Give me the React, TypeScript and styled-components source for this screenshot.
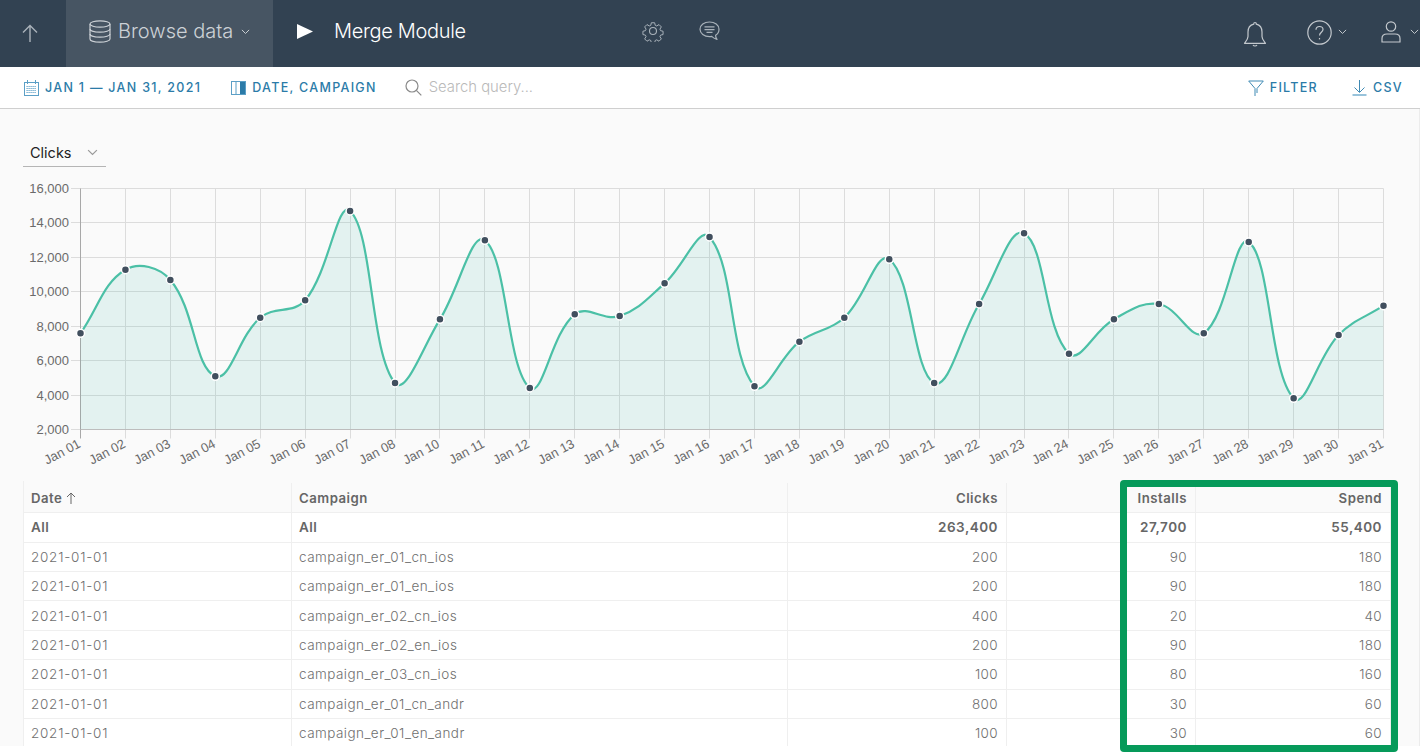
import styled, { createGlobalStyle } from 'styled-components';

const GlobalStyle = createGlobalStyle`
  html, body {
    margin: 0;
    padding: 0;
    background: #fff;
    font-family: Inter, 'Liberation Sans', sans-serif;
  }
`;

const Page = styled.div`
  position: relative;
  width: 1420px;
  height: 752px;
  overflow: hidden;
  background: #fff;
`;

const Nav = styled.header`
  display: flex;
  align-items: center;
  height: 67px;
  padding-right: 1.5px;
  box-sizing: border-box;
  background: #324252;
  color: #d5d9dd;
`;

const BackCell = styled.div`
  display: flex;
  align-items: center;
  justify-content: center;
  width: 60px;
  color: #aab2ba;
`;

const BrowseTab = styled.div`
  display: flex;
  align-items: center;
  height: 67px;
  width: 207px;
  padding: 0 0 5px 23px;
  margin-left: 6px;
  box-sizing: border-box;
  background: #475563;
  color: #ccd1d6;
  font-size: 20px;
  font-weight: 300;
  svg:first-child {
    margin-right: 7px;
  }
`;

const TabCaret = styled.span`
  display: flex;
  margin-left: 8px;
  margin-top: 2px;
`;

const RunButton = styled.div`
  display: flex;
  align-items: center;
  margin-left: 24px;
  padding-bottom: 5px;
  color: #fff;
  font-size: 20px;
  font-weight: 300;
  letter-spacing: -0.32px;
  gap: 21px;
`;

const ToolIcons = styled.div`
  display: flex;
  align-items: center;
  gap: 35px;
  margin-left: 176px;
  padding-bottom: 5px;
  color: #a9b2ba;
`;

const UserIcons = styled.div`
  display: flex;
  align-items: center;
  margin-left: auto;
  padding-bottom: 3px;
  color: #c3c8cd;
`;

const BellSlot = styled.span`
  display: flex;
  margin-top: 4px;
`;

const IconGroup = styled.div<{ $left: number; $gap: number }>`
  display: flex;
  align-items: center;
  gap: ${(p) => p.$gap}px;
  margin-left: ${(p) => p.$left}px;
`;

const Toolbar = styled.div`
  display: flex;
  align-items: center;
  height: 41px;
  padding: 0 17px 0 24px;
  background: #fff;
  border-bottom: 1px solid #cfcfcf;
`;

const ToolLink = styled.div<{ $gap?: number; $left?: number }>`
  display: flex;
  align-items: center;
  gap: ${(p) => p.$gap ?? 6}px;
  margin-left: ${(p) => p.$left ?? 0}px;
  color: #2b7ba8;
  font-size: 12.5px;
  font-weight: 500;
  letter-spacing: 1.3px;
  white-space: nowrap;
`;

const SearchBox = styled.div`
  display: flex;
  align-items: center;
  gap: 7px;
  margin-left: 28px;
  padding-bottom: 1px;
  color: #b9b9b9;
  font-size: 14.8px;
  font-weight: 300;
`;

const Spacer = styled.div`
  flex: 1;
`;

const Main = styled.main`
  height: 637px;
  overflow: hidden;
  background: #fafafa;
  border-right: 1px solid #ececec;
  box-sizing: border-box;
`;

const SelectRow = styled.div`
  display: flex;
  align-items: center;
  justify-content: space-between;
  box-sizing: border-box;
  width: 83px;
  height: 30px;
  margin: 28px 0 13px 23px;
  padding: 2px 8px 0 7px;
  border-bottom: 1px solid #b5b5b5;
  color: #222;
  font-size: 14.5px;
  font-weight: 400;
`;

const ChartSvg = styled.svg`
  display: block;
  width: 1420px;
  height: 301px;
`;

const AxisText = styled.text`
  fill: #6a6a6a;
  font-family: 'Liberation Sans', Arial, sans-serif;
  font-size: 13px;
`;

const Table = styled.div`
  width: 1367px;
  margin-left: 23px;
  border-left: 1px solid #efefef;
  color: #757575;
  font-size: 13.5px;
`;

const Row = styled.div<{ $head?: boolean; $total?: boolean }>`
  display: grid;
  grid-template-columns: 268px 496px 219px 189px 195px;
  box-sizing: border-box;
  height: ${(p) => (p.$head ? 32.2 : 29.4)}px;
  padding-top: ${(p) => (p.$head ? 2 : 0)}px;
  background: ${(p) => (p.$head ? '#fafafa' : '#fff')};
  border-bottom: 1px solid #efefef;
  font-weight: ${(p) => (p.$head || p.$total ? 600 : 300)};
  font-size: ${(p) => (p.$head ? 13.2 : 13.5)}px;
  color: ${(p) => (p.$head || p.$total ? '#666' : '#6f6f6f')};
  letter-spacing: ${(p) => (p.$head || p.$total ? 0.5 : 0.35)}px;
`;

const Cell = styled.div<{ $num?: boolean; $spacing?: number }>`
  display: flex;
  align-items: center;
  justify-content: ${(p) => (p.$num ? 'flex-end' : 'flex-start')};
  padding: 0 8px 0 7px;
  border-right: 1px solid #efefef;
  white-space: nowrap;
  gap: 4px;
  ${(p) => (p.$spacing ? `letter-spacing: ${p.$spacing}px;` : '')}
`;

const Highlight = styled.div`
  position: absolute;
  left: 1120px;
  top: 480px;
  width: 278px;
  height: 272px;
  box-sizing: border-box;
  border: 7px solid #069a5a;
  border-radius: 4px;
  pointer-events: none;
`;

const Caret = ({ size = 10, color = 'currentColor' }: { size?: number; color?: string }) => (
  <svg width={size} height={size * 0.6} viewBox="0 0 10 6" fill="none" stroke={color} strokeWidth="1.1">
    <path d="M1 1l4 4 4-4" />
  </svg>
);

const UpArrow = () => (
  <svg width="16" height="19" viewBox="0 0 16 19" fill="none" stroke="currentColor" strokeWidth="1.4">
    <path d="M8 18V1.5M1 8.500l7-7 7 7" />
  </svg>
);

const DatabaseIcon = () => (
  <svg width="22" height="23" viewBox="0 0 22 23" fill="none" stroke="currentColor" strokeWidth="1.2">
    <ellipse cx="11" cy="4" rx="10" ry="3.2" />
    <path d="M1 4v15c0 1.800 4.500 3.200 10 3.200s10-1.400 10-3.200V4" />
    <path d="M1 9c0 1.800 4.500 3.200 10 3.200S21 10.800 21 9M1 14c0 1.800 4.500 3.200 10 3.200s10-1.400 10-3.200" />
  </svg>
);

const PlayIcon = () => (
  <svg width="16" height="15" viewBox="0 0 16 15" fill="#fff">
    <path d="M0 0l16 7.500L0 15z" />
  </svg>
);

const GearIcon = () => (
  <svg width="22" height="22" viewBox="0 0 24 24" fill="none" stroke="currentColor" strokeWidth="1.2" strokeLinejoin="round">
    <circle cx="12" cy="12" r="3.800" />
    <path d="M10 2h4l.7 3.100 1.800.8 2.800-1.700 2.800 2.800-1.700 2.800.8 1.800 3 .7v4l-3 .7-.8 1.800 1.700 2.800-2.800 2.800-2.800-1.700-1.800.8-.7 3h-4l-.7-3-1.800-.8-2.800 1.700-2.800-2.800 1.700-2.800-.8-1.800-3-.7v-4l3-.7.8-1.800-1.700-2.800 2.800-2.800 2.800 1.700 1.800-.8z" transform="translate(1.200 1.200) scale(.9)" />
  </svg>
);

const ChatIcon = () => (
  <svg width="21" height="20" viewBox="0 0 21 20" fill="none" stroke="currentColor" strokeWidth="1.2" strokeLinejoin="round">
    <path d="M10.500 1C5.200 1 1 4.100 1 8.300s4.200 7.300 9.500 7.300c.8 0 1.500-.1 2.200-.2 1.300 1.300 3 2.300 5.300 3.100-1-1.100-1.400-2.500-1.400-4.200 2.100-1.300 3.400-3.500 3.400-6C20 4.100 15.800 1 10.500 1z" />
    <path d="M5.500 5.800h10M5.500 8.600h10M7.500 11.400h6" />
  </svg>
);

const BellIcon = () => (
  <svg width="24" height="26" viewBox="0 0 24 26" fill="none" stroke="currentColor" strokeWidth="1.2" strokeLinejoin="round">
    <path d="M12 1.500c-.9 0-1.300.6-1.300 1.700C7 4.100 5 7 5 11v4.500c0 2.800-1.800 4.600-3.500 6.800h21c-1.700-2.200-3.500-4-3.500-6.800V11c0-4-2-6.900-5.700-7.800 0-1.100-.4-1.700-1.300-1.700z" />
    <path d="M10 24c.5.700 1.200 1 2 1s1.500-.3 2-1" />
  </svg>
);

const HelpIcon = () => (
  <svg width="25" height="25" viewBox="0 0 25 25" fill="none" stroke="currentColor" strokeWidth="1.2">
    <circle cx="12.500" cy="12.500" r="11.700" />
    <path d="M9 9.800c0-2 1.600-3.300 3.500-3.300s3.500 1.300 3.500 3c0 2.700-3.500 2.800-3.500 6" />
    <path d="M12.500 18v1.400" />
  </svg>
);

const UserIcon = () => (
  <svg width="20" height="22" viewBox="0 0 20 22" fill="none" stroke="currentColor" strokeWidth="1.2">
    <circle cx="10" cy="5.500" r="4.700" />
    <path d="M1 21v-3.500C1 14.500 3 13 6 13h8c3 0 5 1.500 5 4.500V21z" />
  </svg>
);

const CalendarIcon = () => (
  <svg width="15" height="16" viewBox="0 0 15 16" fill="none" stroke="#5b9fc6" strokeWidth="1">
    <rect x=".5" y="2.500" width="14" height="13" />
    <path d="M3.500 0v4M11.500 0v4" />
    <path d="M2.500 6.500h10M2.500 8.500h10M2.500 10.500h10M2.500 12.500h10" strokeDasharray="1.200 .8" />
  </svg>
);

const ColumnsIcon = () => (
  <svg width="15" height="14" viewBox="0 0 15 14" fill="none">
    <rect x=".5" y=".5" width="14" height="13" stroke="#5b9fc6" />
    <rect x="9" y="1" width="5" height="12" fill="#2b7ba8" />
    <path d="M5 1v12" stroke="#5b9fc6" />
  </svg>
);

const SearchIcon = () => (
  <svg width="17" height="17" viewBox="0 0 17 17" fill="none" stroke="#8a8a8a" strokeWidth="1.2">
    <circle cx="7" cy="7" r="6" />
    <path d="M11.300 11.300l5 5" />
  </svg>
);

const FilterIcon = () => (
  <svg width="16" height="16" viewBox="0 0 16 16" fill="none" stroke="#3f8ab4" strokeWidth="1">
    <path d="M.7 1h14.600L9 8.500M.7 1L7 8.500V16M9 8.500v4.500" />
  </svg>
);

const DownloadIcon = () => (
  <svg width="15" height="16" viewBox="0 0 15 16" fill="none" stroke="#3f8ab4" strokeWidth="1">
    <path d="M7.500 0v12M2.500 7.500l5 5 5-5" />
    <path d="M.5 15h14" stroke="#7fb4d2" strokeWidth="1.600" />
  </svg>
);

// point y values were read off the chart, in page pixels minus the svg top (180)
const POINTS = [
  333.3, 269.7, 280, 376.3, 317.7, 300.3, 211, 383, 319.3, 240.3, 388, 314.3, 316, 283.3, 237,
  386.3, 341.7, 317.7, 259.3, 383, 304, 233.3, 353.7, 319.3, 304, 333.3, 242, 398.3, 335, 305.7,
].map((y) => y - 180);

const LEFT = 80.5;
const RIGHT = 1383.5;
const TOP = 8.5;
const BOTTOM = 249.5;
const STEP = (RIGHT - LEFT) / 29;

const LABELS = [1, 2, 3, 4, 5, 6, 7, 8, 10, 11, 12, 13, 14, 15, 16, 17, 18, 19, 20, 21, 22, 23, 24, 25, 26, 27, 28, 29, 30, 31];
const Y_TICKS = [16000, 14000, 12000, 10000, 8000, 6000, 4000, 2000];

const pts = POINTS.map((y, i) => ({ x: LEFT + i * STEP, y }));

// same spline as a chart.js line with tension 0.4
const buildLine = () => {
  const ctrl = pts.map((p, i) => {
    const a = pts[i - 1] ?? p;
    const b = pts[i + 1] ?? p;
    const d1 = Math.hypot(p.x - a.x, p.y - a.y);
    const d2 = Math.hypot(b.x - p.x, b.y - p.y);
    const s1 = d1 / (d1 + d2 || 1);
    const s2 = d2 / (d1 + d2 || 1);
    return {
      px: p.x - 0.4 * s1 * (b.x - a.x),
      py: p.y - 0.4 * s1 * (b.y - a.y),
      nx: p.x + 0.4 * s2 * (b.x - a.x),
      ny: p.y + 0.4 * s2 * (b.y - a.y),
    };
  });
  let d = `M${pts[0].x} ${pts[0].y}`;
  for (let i = 1; i < pts.length; i += 1) {
    d += `C${ctrl[i - 1].nx} ${ctrl[i - 1].ny} ${ctrl[i].px} ${ctrl[i].py} ${pts[i].x} ${pts[i].y}`;
  }
  return d;
};

const LINE = buildLine();

const Chart = () => (
  <ChartSvg viewBox="0 0 1420 301">
    {Y_TICKS.map((v, i) => {
      const y = Math.floor(TOP + (i * (BOTTOM - TOP)) / 7) + 0.5;
      return (
        <g key={v}>
          <line x1={71} x2={RIGHT} y1={y} y2={y} stroke="#dcdcdc" />
          <AxisText x={69} y={y + 4.5} textAnchor="end">
            {v.toLocaleString('en-US')}
          </AxisText>
        </g>
      );
    })}
    {pts.map((p, i) => {
      const x = Math.floor(p.x) + 0.5;
      return (
        <g key={p.x}>
          <line x1={x} x2={x} y1={TOP} y2={BOTTOM + 9} stroke={i === 0 ? '#a8a8a8' : '#dcdcdc'} />
          <AxisText
            x={x + 1}
            y={BOTTOM + 17}
            textAnchor="end"
            transform={`rotate(-28 ${x + 1} ${BOTTOM + 17})`}
          >
            {`Jan ${String(LABELS[i]).padStart(2, '0')}`}
          </AxisText>
        </g>
      );
    })}
    <path d={`${LINE}L${RIGHT} ${BOTTOM}L${LEFT} ${BOTTOM}Z`} fill="rgba(75, 195, 180, 0.13)" />
    <line x1={LEFT} x2={RIGHT} y1={BOTTOM} y2={BOTTOM} stroke="#bdbdbd" />
    <path d={LINE} fill="none" stroke="#4bc0a6" strokeWidth="2.2" />
    {pts.map((p) => (
      <circle key={p.x} cx={p.x} cy={p.y} r="4" fill="#414f5e" stroke="#fff" strokeWidth="1.500" />
    ))}
  </ChartSvg>
);

const ROWS = [
  ['campaign_er_01_cn_ios', '200', '90', '180'],
  ['campaign_er_01_en_ios', '200', '90', '180'],
  ['campaign_er_02_cn_ios', '400', '20', '40'],
  ['campaign_er_02_en_ios', '200', '90', '180'],
  ['campaign_er_03_cn_ios', '100', '80', '160'],
  ['campaign_er_01_cn_andr', '800', '30', '60'],
  ['campaign_er_01_en_andr', '100', '30', '60'],
];

export default function App() {
  return (
    <Page>
      <GlobalStyle />
      <Nav>
        <BackCell>
          <UpArrow />
        </BackCell>
        <BrowseTab>
          <DatabaseIcon />
          Browse data
          <TabCaret>
            <Caret size={9} />
          </TabCaret>
        </BrowseTab>
        <RunButton>
          <PlayIcon />
          Merge Module
        </RunButton>
        <ToolIcons>
          <GearIcon />
          <ChatIcon />
        </ToolIcons>
        <UserIcons>
          <BellSlot>
            <BellIcon />
          </BellSlot>
          <IconGroup $left={40} $gap={5.5}>
            <HelpIcon />
            <Caret size={9} />
          </IconGroup>
          <IconGroup $left={34.5} $gap={8.5}>
            <UserIcon />
            <Caret size={9} />
          </IconGroup>
        </UserIcons>
      </Nav>
      <Toolbar>
        <ToolLink>
          <CalendarIcon />
          JAN 1 — JAN 31, 2021
        </ToolLink>
        <ToolLink $left={30}>
          <ColumnsIcon />
          DATE, CAMPAIGN
        </ToolLink>
        <SearchBox>
          <SearchIcon />
          Search query...
        </SearchBox>
        <Spacer />
        <ToolLink $gap={6}>
          <FilterIcon />
          FILTER
        </ToolLink>
        <ToolLink $left={34}>
          <DownloadIcon />
          CSV
        </ToolLink>
      </Toolbar>
      <Main>
        <SelectRow>
          Clicks
          <Caret size={11} color="#9a9a9a" />
        </SelectRow>
        <Chart />
        <Table>
          <Row $head>
            <Cell>
              Date
              <svg width="10" height="12" viewBox="0 0 10 12" fill="none" stroke="#666" strokeWidth="1">
                <path d="M5 12V1M1 5l4-4 4 4" />
              </svg>
            </Cell>
            <Cell>Campaign</Cell>
            <Cell $num>Clicks</Cell>
            <Cell $num>Installs</Cell>
            <Cell $num>Spend</Cell>
          </Row>
          <Row $total>
            <Cell>All</Cell>
            <Cell>All</Cell>
            <Cell $num>263,400</Cell>
            <Cell $num>27,700</Cell>
            <Cell $num>55,400</Cell>
          </Row>
          {ROWS.map((r) => (
            <Row key={r[0]}>
              <Cell $spacing={0.75}>2021-01-01</Cell>
              <Cell $spacing={0.45}>{r[0]}</Cell>
              <Cell $num>{r[1]}</Cell>
              <Cell $num>{r[2]}</Cell>
              <Cell $num>{r[3]}</Cell>
            </Row>
          ))}
        </Table>
      </Main>
      <Highlight />
    </Page>
  );
}
